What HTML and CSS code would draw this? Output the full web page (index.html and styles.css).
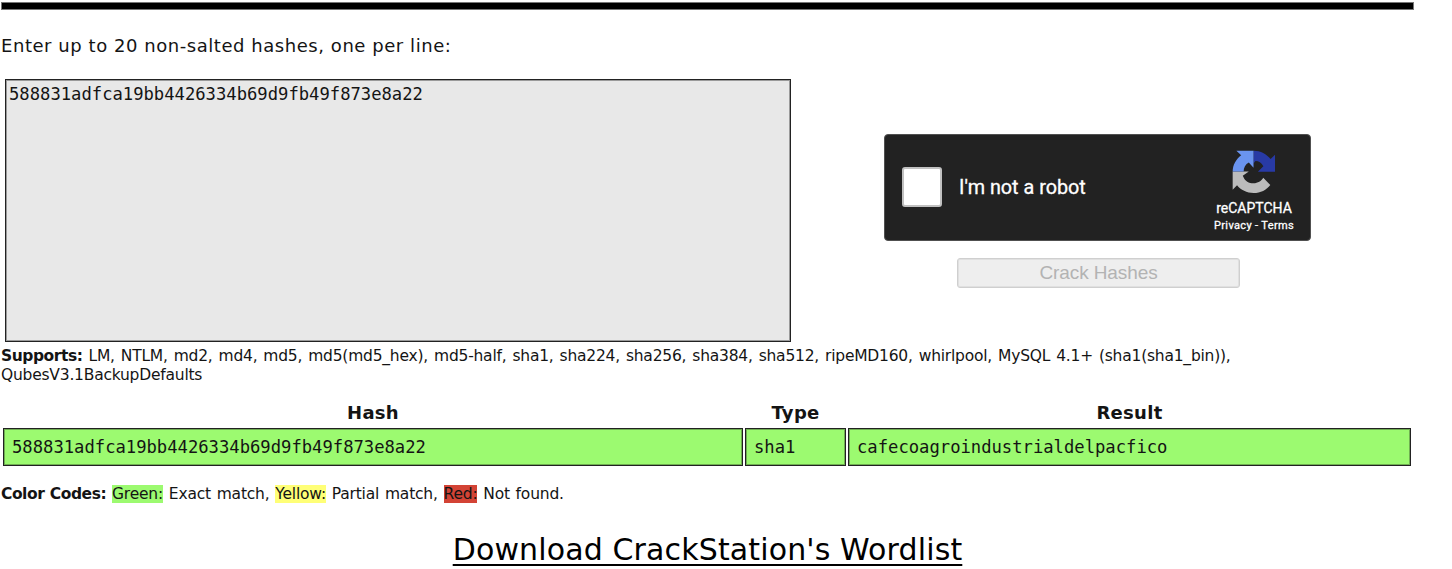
FILE: index.html
```html
<!DOCTYPE html>
<html lang="en">
<head>
<meta charset="utf-8">
<title>CrackStation</title>
<link rel="stylesheet" href="styles.css">
</head>
<body>
<main class="page">
  <hr class="rule">
  <p class="prompt">Enter up to 20 non-salted hashes, one per line:</p>
  <form class="entry">
    <textarea class="hashes" spellcheck="false">588831adfca19bb4426334b69d9fb49f873e8a22</textarea>
    <div class="verify">
      <div class="captcha">
        <div class="check"></div>
        <span class="captcha-label">I'm not a robot</span>
        <div class="brand">
          <svg class="logo" viewBox="0 0 64 64">
            <path fill="#bcbcbc" d="M1 32v27l6.500-6.500C13 59.300 22 64 32.200 64c10.400 0 19.200-4.600 24.800-12L46.500 41.300C43.600 46 38.500 49.500 32 49.500c-7 0-12.600-3.700-15-9.500l-1-1.500L25 32z"/>
            <path fill="#283aa5" d="M32 1h.3c10.200 0 19.200 5 25.200 12.500L64 7v25.400H38.500l8.200-8.300c-2.600-5-7-7.600-11.700-7.600L32 20z"/>
            <path fill="#6a94ef" d="M6.500 1H32v25.500l-7-8c-5 2.500-7.700 7.500-7.700 13.500H1C1 22.500 6 13.500 13.700 7.800z"/>
          </svg>
          <span class="brand-name">reCAPTCHA</span>
          <span class="brand-links">Privacy - Terms</span>
        </div>
      </div>
      <button class="crack" type="button" disabled>Crack Hashes</button>
    </div>
  </form>
  <p class="supports"><b>Supports:</b> LM, NTLM, md2, md4, md5, md5(md5_hex), md5-half, sha1, sha224, sha256, sha384, sha512, ripeMD160, whirlpool, MySQL 4.1+ (sha1(sha1_bin)),<br>QubesV3.1BackupDefaults</p>
  <div class="results">
    <div class="head">Hash</div><div class="head">Type</div><div class="head">Result</div>
    <div class="cell">588831adfca19bb4426334b69d9fb49f873e8a22</div><div class="cell">sha1</div><div class="cell">cafecoagroindustrialdelpacfico</div>
  </div>
  <p class="codes"><b>Color Codes:</b> <span class="green">Green:</span> Exact match, <span class="yellow">Yellow:</span> Partial match, <span class="red">Red:</span> Not found.</p>
  <div class="download"><a class="wordlist">Download CrackStation's Wordlist</a></div>
</main>
</body>
</html>
```
FILE: styles.css
```css
* { box-sizing: border-box; }
body { margin: 0; background: #fff; color: #141414; font-family: "DejaVu Sans", sans-serif; overflow: hidden; }
p { margin: 0; white-space: nowrap; }
b { letter-spacing: -0.45px; word-spacing: 0.5px; }
.page { width: 1414px; height: 569px; padding-top: 2px; overflow: hidden; }
.rule { height: 8px; margin: 0 0 0 1px; border: 1px solid #777; background: #000; }
.prompt { height: 69px; padding: 24px 0 0 1px; font-size: 18px; line-height: 24px; letter-spacing: 0.55px; }
.entry { display: flex; height: 264px; padding-left: 5px; }
.hashes { width: 786px; height: 263px; margin: 0; padding: 4px 3px; border: 1px solid #222; outline: 0; box-shadow: inset 0 0 0 1px #9a9a9a; resize: none; background: #e8e8e8; color: #141414; font: 17.2px/20px "DejaVu Sans Mono", monospace; }
.verify { display: flex; flex-direction: column; align-items: center; gap: 17px; width: 427px; margin-left: 93px; padding-top: 55px; }
.captcha { display: flex; align-items: center; width: 427px; height: 107px; padding: 0 0 2px 17px; border: 1px solid #505050; border-radius: 4px; background: #222; color: #fff; font-family: Roboto, sans-serif; }
.check { width: 40px; height: 40px; border: 2px solid #c1c1c1; border-radius: 3px; background: #fff; }
.captcha-label { margin: 2px 0 0 17px; font-size: 19.800px; -webkit-text-stroke: 0.3px #fff; white-space: nowrap; }
.brand { display: flex; flex-direction: column; align-items: center; width: 90px; margin: 12px 11px 0 auto; }
.logo { width: 43px; height: 43px; margin-right: 1px; }
.brand-name { margin-top: 6px; font-size: 14px; line-height: 18px; -webkit-text-stroke: 0.3px #fff; }
.brand-links { font-size: 11px; line-height: 18px; letter-spacing: 0.35px; white-space: nowrap; -webkit-text-stroke: 0.3px #fff; }
.crack { width: 283px; height: 30px; margin-left: 2px; padding: 0; border: 1px solid #cfcfcf; border-radius: 3px; box-shadow: inset 0 0 0 1px #e0e0e0; background: #eee; color: #b3b3b3; font: 19px/24px "Liberation Sans", sans-serif; letter-spacing: -0.1px; }
.supports { height: 59px; padding: 4px 0 0 1px; font-size: 15.500px; line-height: 18.500px; letter-spacing: -0.22px; word-spacing: 1.3px; }
.results { display: grid; grid-template-columns: 740px 101px 563px; column-gap: 2px; margin-left: 3px; }
.head { height: 26px; font-size: 18px; font-weight: bold; line-height: 21px; text-align: center; letter-spacing: 0.3px; }
.cell { height: 38px; padding: 0 8px; border: 1px solid #222; box-shadow: inset 0 0 0 1px #6fae51; background: #9cfa70; font: 17.2px/37px "DejaVu Sans Mono", monospace; }
.codes { height: 60px; padding: 19px 0 0 1px; font-size: 15.500px; line-height: 19px; letter-spacing: -0.2px; word-spacing: 1.1px; }
.green { background: #9cfa70; }
.yellow { background: #ffff77; }
.red { background: #d34335; }
.download { padding: 4px 0 0 1px; text-align: center; }
.wordlist { color: #000; font-size: 30px; line-height: 40px; letter-spacing: 0.13px; text-decoration: underline; text-decoration-thickness: 2px; text-underline-offset: 4px; }
```
